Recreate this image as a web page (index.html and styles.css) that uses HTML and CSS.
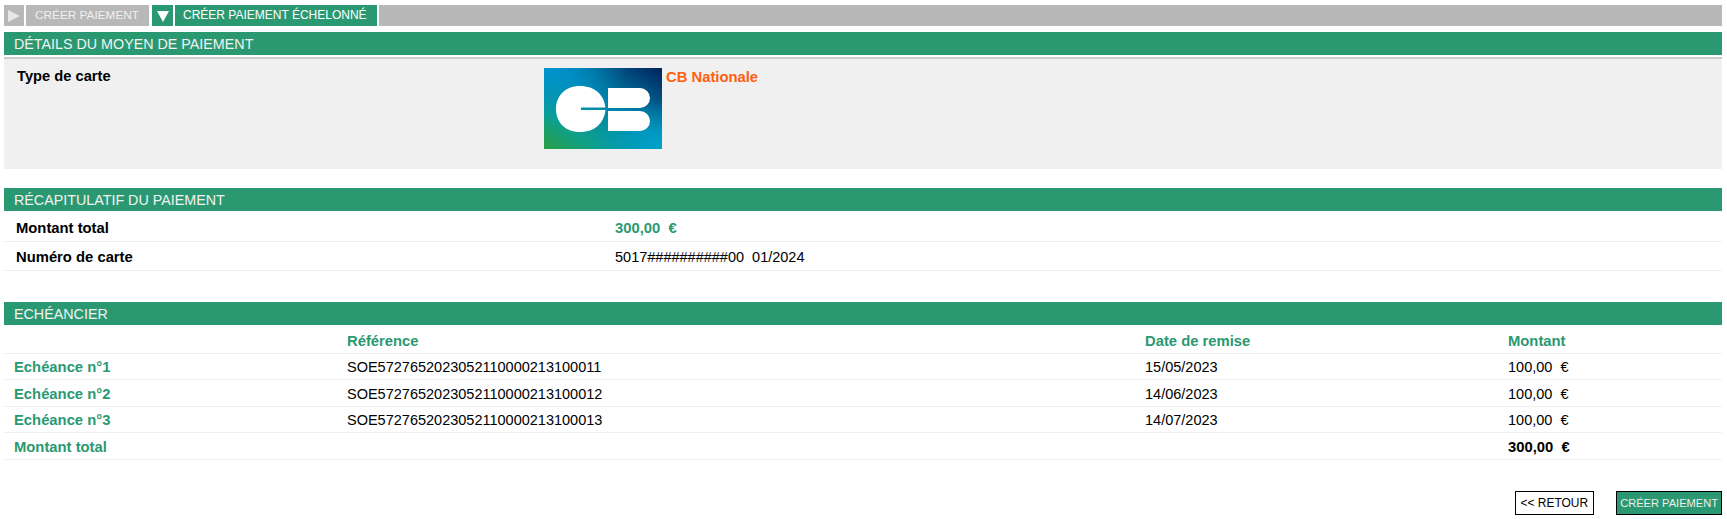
FILE: index.html
```html
<!DOCTYPE html>
<html lang="fr">
<head>
<meta charset="utf-8">
<title>Créer paiement échelonné</title>
<link rel="stylesheet" href="styles.css">
</head>
<body>

<!-- onglets -->
<div class="tabs">
	<span class="tab-arrow"><svg width="14" height="14" viewBox="0 0 14 14"><path d="M1 1 L13 7 L1 13 Z" fill="#e6e6e6"/></svg></span>
	<span class="tab">CRÉER PAIEMENT</span>
	<span class="tab-arrow on"><svg width="14" height="14" viewBox="0 0 14 14"><path d="M1 2 L13 2 L7 13 Z" fill="#fff"/></svg></span>
	<span class="tab on">CRÉER PAIEMENT ÉCHELONNÉ</span>
	<span class="tab-rest"></span>
</div>

<!-- moyen de paiement -->
<h2 class="title">DÉTAILS DU MOYEN DE PAIEMENT</h2>
<div class="card-panel">
	<div class="card-label">Type de carte</div>
	<div class="card-logo">
		<svg width="118" height="81" viewBox="0 0 118 81">
			<defs>
				<linearGradient id="cbbg" x1="0" y1="1" x2="1" y2="0">
					<stop offset="0" stop-color="#2b9e45"/>
					<stop offset="0.22" stop-color="#0fa08a"/>
					<stop offset="0.55" stop-color="#0085ad"/>
					<stop offset="1" stop-color="#02235c"/>
				</linearGradient>
				<radialGradient id="cbtl" cx="0" cy="0" r="0.7">
					<stop offset="0" stop-color="#0094cf"/>
					<stop offset="1" stop-color="#0094cf" stop-opacity="0"/>
				</radialGradient>
				<radialGradient id="cbbr" cx="1" cy="1" r="0.6">
					<stop offset="0" stop-color="#00a3cc"/>
					<stop offset="1" stop-color="#00a3cc" stop-opacity="0"/>
				</radialGradient>
			</defs>
			<rect width="118" height="81" fill="url(#cbbg)"/>
			<rect width="118" height="81" fill="url(#cbtl)"/>
			<rect width="118" height="81" fill="url(#cbbr)"/>
			<path d="M36 18 C51 18 60 27 61.5 39.5 L37 39.5 L37 42 L61.5 42 C60 55 51 64 36 64 C21 64 12 54 12 41 C12 28 21 18 36 18 Z" fill="#fff"/>
			<path d="M64 20 L96 20 A10 10 0 0 1 96 40 L64 40 Z M64 43 L96 43 A10 10 0 0 1 96 63 L64 63 Z" fill="#fff"/>
		</svg>
	</div>
	<div class="card-name">CB Nationale</div>
</div>

<!-- recapitulatif -->
<h2 class="title second">RÉCAPITULATIF DU PAIEMENT</h2>
<div class="recap-row first">
	<div class="recap-label">Montant total</div>
	<div class="recap-amount">300,00&nbsp; €</div>
</div>
<div class="recap-row">
	<div class="recap-label">Numéro de carte</div>
	<div>5017##########00&nbsp; 01/2024</div>
</div>

<!-- echeancier -->
<h2 class="title third">ECHÉANCIER</h2>
<table class="sched" cellspacing="0" cellpadding="0">
	<tr class="head">
		<td class="c1"></td>
		<td class="c2">Référence</td>
		<td class="c3">Date de remise</td>
		<td>Montant</td>
	</tr>
	<tr>
		<td class="name">Echéance n°1</td>
		<td>SOE5727652023052110000213100011</td>
		<td>15/05/2023</td>
		<td>100,00&nbsp; €</td>
	</tr>
	<tr>
		<td class="name">Echéance n°2</td>
		<td>SOE5727652023052110000213100012</td>
		<td>14/06/2023</td>
		<td>100,00&nbsp; €</td>
	</tr>
	<tr>
		<td class="name">Echéance n°3</td>
		<td>SOE5727652023052110000213100013</td>
		<td>14/07/2023</td>
		<td>100,00&nbsp; €</td>
	</tr>
	<tr>
		<td class="name">Montant total</td>
		<td></td>
		<td></td>
		<td class="total">300,00&nbsp; €</td>
	</tr>
</table>

<!-- boutons -->
<div class="buttons">
	<a class="btn">&lt;&lt; RETOUR</a>
	<a class="btn go">CRÉER PAIEMENT</a>
</div>

</body>
</html>
```

FILE: styles.css
```css
html, body {margin:0; padding:0; background:#fff;}
body {padding:5px 5px 0 4px; font-family:"Liberation Sans", Arial, sans-serif; font-size:14.5px; color:#000;}

.tabs {display:flex; height:21px; gap:1px; font-size:11.8px; color:#fff;}
.tab-arrow {width:20px; background:#b8b8b8; display:flex; align-items:center; justify-content:center; margin-right:1px;}
.tab-arrow.on {width:21px; background:#2a9971; margin-left:2px;}
.tab {background:#b8b8b8; line-height:21px; padding:0 10px 0 9px; color:#f0f0f0;}
.tab.on {background:#2a9971; color:#fff; padding:0 10px 0 8px; font-size:12px;}
.tab-rest {flex:1; background:#b8b8b8; margin-left:1px;}

.title {margin:6px 0 0; height:23px; line-height:24px; padding-left:10px; background:#2a9971; color:#f2f2f2; font-size:14.3px; font-weight:normal;}
.second {margin-top:19px;}
.third {margin-top:31px;}

.card-panel {display:flex; margin-top:2px; height:110px; background:#f0f0f0; border-top:2px solid #cccccc;}
.card-label {width:527px; padding:9px 0 0 13px; font-size:14.7px; font-weight:bold;}
.card-logo {padding-top:9px;}
.card-logo svg {display:block;}
.card-name {padding:10px 0 0 4px; font-size:14.8px; font-weight:bold; color:#ff5f0f;}

.recap-row {display:flex; height:26px; padding-top:2px; line-height:27px; border-bottom:1px solid #efefef;}
.recap-row.first {height:28px; line-height:31px;}
.recap-label {width:599px; padding-left:12px; font-size:14.8px; font-weight:bold;}
.recap-amount {font-size:14.8px; font-weight:bold; color:#2a9971;}

.sched {width:100%; border-collapse:collapse;}
.sched td {height:23px; padding:2px 0 0; border-bottom:1px solid #efefef; vertical-align:middle;}
.sched tr:nth-child(odd) td {height:24px;}
.sched .c1 {width:343px;}
.sched .c2 {width:798px;}
.sched .c3 {width:363px;}
.sched tr.head td {height:28px; padding-top:4px; box-sizing:border-box; font-size:14.8px; font-weight:bold; color:#2a9971;}
.sched .name {padding-left:10px; font-size:14.8px; font-weight:bold; color:#2a9971;}
.sched .total {font-size:14.8px; font-weight:bold;}

.buttons {display:flex; justify-content:flex-end; gap:22px; margin-top:31px;}
.btn {height:24px; line-height:22px; box-sizing:border-box; border:1px solid #000; padding:0 5px 0 4px; font-size:12px;}
.btn.go {background:#2a9971; color:#eee; padding:0 3px; font-size:11.1px;}
```
